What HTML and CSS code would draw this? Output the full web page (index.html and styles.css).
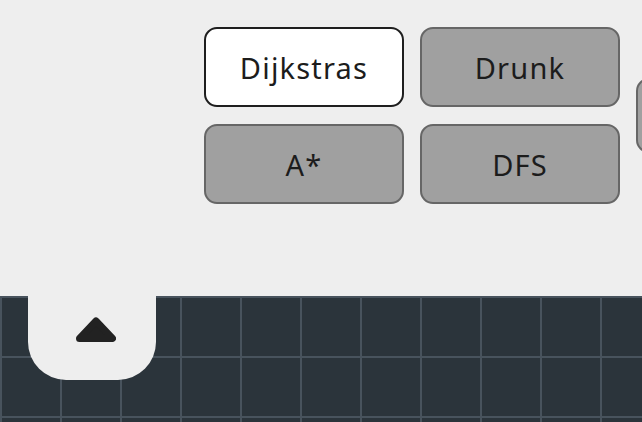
FILE: index.html
```html
<!DOCTYPE html>
<html>
<head>
<meta charset="utf-8">
<link rel="stylesheet" href="styles.css">
</head>
<body>
<div class="panel">
  <div class="algos">
    <button class="algo active">Dijkstras</button>
    <button class="algo">Drunk</button>
    <button class="algo extra"></button>
    <button class="algo">A*</button>
    <button class="algo">DFS</button>
  </div>
</div>
<div class="canvas">
  <div class="tab">
    <svg class="arrow" width="40" height="26" viewBox="0 0 40 26">
      <path d="M20 4 L36.5 21.5 L3.5 21.5 Z" fill="#222" stroke="#222" stroke-width="7" stroke-linejoin="round"/>
    </svg>
  </div>
</div>
</body>
</html>
```
FILE: styles.css
```css
html, body {
  margin: 0;
  padding: 0;
  width: 642px;
  height: 422px;
  overflow: hidden;
  background: #eeeeee;
}
.panel {
  height: 296px;
  background: #eeeeee;
  box-sizing: border-box;
  padding: 27px 0 0 204px;
  overflow: hidden;
}
.algos {
  display: grid;
  grid-template-columns: 200px 200px 200px;
  grid-template-rows: 80px 80px;
  column-gap: 16px;
  row-gap: 17px;
  width: 700px;
}
.algo {
  box-sizing: border-box;
  border: 2px solid #666666;
  border-radius: 13px;
  background: #a0a0a0;
  color: #1c1c1c;
  font-family: "Noto Sans", sans-serif;
  font-size: 29px;
  letter-spacing: 1.2px;
  padding: 0;
  margin: 0;
}
.algo.active {
  background: #ffffff;
  border-color: #1e1e1e;
}
.algo.extra {
  grid-column: 3;
  grid-row: 1 / span 2;
  align-self: center;
  height: 75px;
}
.canvas {
  height: 126px;
  background-color: #2b343b;
  background-image:
    linear-gradient(to bottom, #48535d 0, #48535d 2px, transparent 2px),
    linear-gradient(to right, #48535d 0, #48535d 2px, transparent 2px);
  background-size: 60px 60px;
  padding-left: 28px;
}
.tab {
  width: 128px;
  height: 84px;
  background: #eeeeee;
  border-radius: 0 0 38px 38px;
  display: flex;
  justify-content: center;
  padding: 21px 0 0 8px;
  box-sizing: border-box;
}
.arrow {
  display: block;
}
```
